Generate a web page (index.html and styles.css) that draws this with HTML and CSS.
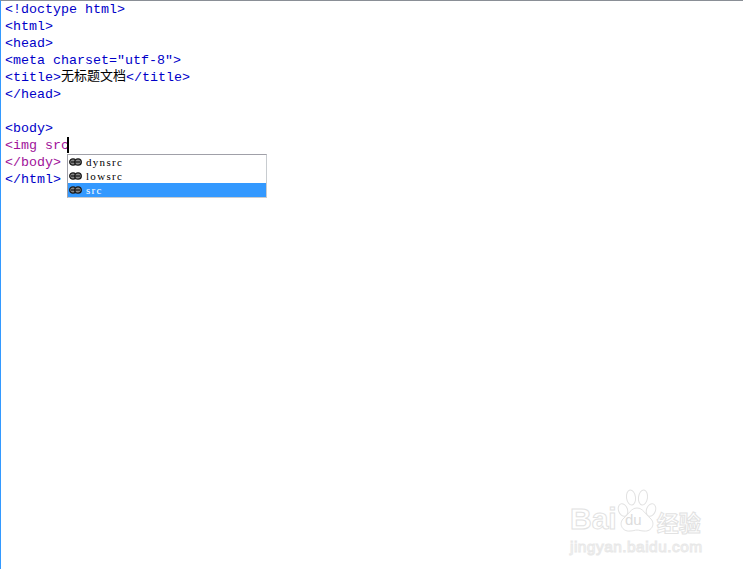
FILE: index.html
```
<!DOCTYPE html>
<html lang="zh">
<head>
<meta charset="utf-8">
<title>无标题文档</title>
<link rel="stylesheet" href="styles.css">
</head>
<body>
<main class="editor">
<div class="line tag">&lt;!doctype html&gt;</div>
<div class="line tag">&lt;html&gt;</div>
<div class="line tag">&lt;head&gt;</div>
<div class="line tag">&lt;meta charset=<span class="val">"utf-8"</span>&gt;</div>
<div class="line tag">&lt;title&gt;<span class="cjk">无标题文档</span>&lt;/title&gt;</div>
<div class="line tag">&lt;/head&gt;</div>
<div class="line"></div>
<div class="line tag">&lt;body&gt;</div>
<div class="line img">&lt;img src<span class="caret"></span></div>
<div class="line body">&lt;/body&gt;</div>
<div class="line tag">&lt;/html&gt;</div>
</main>
<ul class="popup">
<li class="item"><svg class="chain" viewBox="0 0 13 8"><ellipse cx="4" cy="4" rx="3.3" ry="3.2"/><ellipse cx="9" cy="4" rx="3.3" ry="3.2"/><path d="M2 4h9"/></svg><span class="label">dynsrc</span></li>
<li class="item"><svg class="chain" viewBox="0 0 13 8"><ellipse cx="4" cy="4" rx="3.3" ry="3.2"/><ellipse cx="9" cy="4" rx="3.3" ry="3.2"/><path d="M2 4h9"/></svg><span class="label">lowsrc</span></li>
<li class="item sel"><svg class="chain" viewBox="0 0 13 8"><ellipse cx="4" cy="4" rx="3.3" ry="3.2"/><ellipse cx="9" cy="4" rx="3.3" ry="3.2"/><path d="M2 4h9"/></svg><span class="label">src</span></li>
</ul>
<div class="mark">
<div class="brand"><span class="bai">Bai</span><svg class="paw" viewBox="0 0 42 46"><ellipse cx="7" cy="21" rx="4.5" ry="6.5" transform="rotate(-20 7 21)"/><ellipse cx="15" cy="8.5" rx="4.5" ry="7.5" transform="rotate(-8 15 8.5)"/><ellipse cx="27" cy="8.5" rx="4.5" ry="7.5" transform="rotate(8 27 8.5)"/><ellipse cx="35" cy="21" rx="4.5" ry="6.5" transform="rotate(20 35 21)"/><path d="M21 19c6 0 8 6 13 10 6 5 2 14-6 13-3 0-5-1-7-1s-4 1-7 1c-8 1-12-8-6-13 5-4 7-10 13-10z"/></svg><span class="du">du</span><span class="jy">经验</span></div>
<div class="url">jingyan.baidu.com</div>
</div>
</body>
</html>
```
FILE: styles.css
```
html, body {
  margin: 0;
  height: 100%;
  background: #fff;
  overflow: hidden;
}
body {
  position: relative;
  box-sizing: border-box;
  border-top: 1px solid #8a8f96;
  border-left: 1px solid #3399ff;
}
.editor {
  padding-left: 4px;
  font: 13.33px/17px "Liberation Mono", "Courier New", monospace;
}
.line {
  height: 17px;
  white-space: pre;
}
.tag { color: #0000c8; }
.val { color: #0000c8; }
.img { color: #a0129a; }
.body { color: #a0129a; }
.cjk {
  color: #000;
  font-family: "Noto Sans CJK SC", sans-serif;
  font-size: 13px;
  line-height: 0;
  vertical-align: 1px;
}
.caret {
  display: inline-block;
  width: 2px;
  height: 16px;
  margin-left: -2px;
  background: #000;
  vertical-align: -4px;
}
.popup {
  position: absolute;
  left: 66px;
  top: 153px;
  width: 200px;
  margin: 0;
  padding: 0;
  box-sizing: border-box;
  list-style: none;
  background: #fff;
  border: 1px solid #a0a0a8;
  border-right-color: #c8ccd0;
  border-bottom-color: #c8ccd0;
  font: 11px/14px "Liberation Serif", serif;
  color: #000;
}
.item {
  display: flex;
  align-items: center;
  height: 14px;
  padding-left: 1px;
}
.label {
  letter-spacing: 1.3px;
}
.sel {
  background: #3399ff;
  color: #fff;
}
.chain {
  width: 13px;
  height: 8px;
  margin-right: 4px;
  fill: #888;
  stroke: #1a1a1a;
  stroke-width: 1.3;
}
.mark {
  position: absolute;
  left: 569px;
  top: 487px;
  width: 136px;
  color: #fff;
  font-family: "Liberation Sans", sans-serif;
}
.brand {
  position: relative;
  display: flex;
  align-items: flex-end;
  height: 46px;
}
.bai {
  font-size: 30px;
  line-height: 30px;
  font-weight: 700;
  color: #fff;
  -webkit-text-stroke: 1px #e2e2e2;
}
.paw {
  width: 42px;
  height: 46px;
  margin: 0 0 -1px -1px;
  fill: #fff;
  stroke: #e2e2e2;
  stroke-width: 1;
}
.du {
  position: absolute;
  left: 55px;
  top: 24px;
  font-size: 15px;
  line-height: 16px;
  color: #dcdcdc;
}
.jy {
  font-family: "Noto Sans CJK SC", sans-serif;
  font-size: 22px;
  line-height: 26px;
  font-weight: 700;
  color: #fff;
  -webkit-text-stroke: 1px #e2e2e2;
  margin-left: -1px;
  white-space: nowrap;
}
.url {
  margin-top: 4px;
  font-size: 15.5px;
  line-height: 18px;
  letter-spacing: 0.45px;
  color: #fff;
  -webkit-text-stroke: 1px #e8e8e8;
  white-space: nowrap;
}
```
